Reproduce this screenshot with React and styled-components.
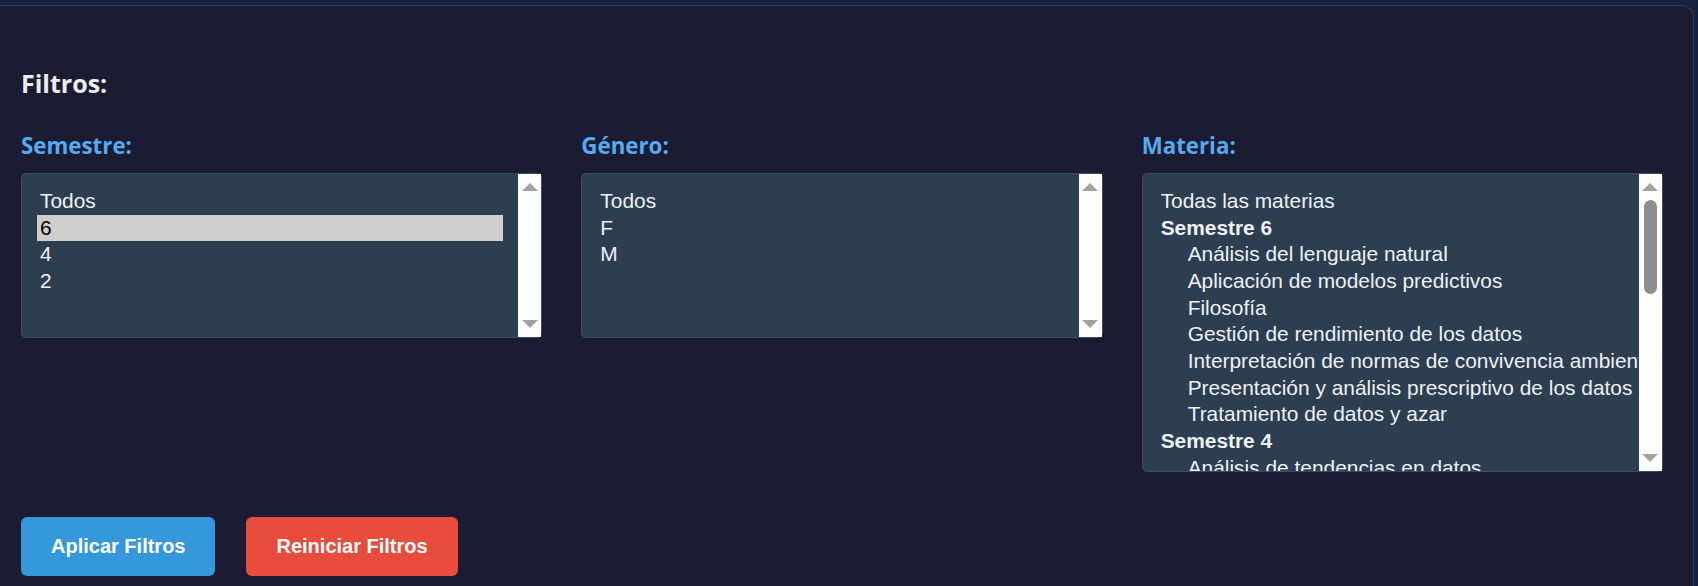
import React from "react";
import styled, { createGlobalStyle } from "styled-components";

const ROW = 26.67;

const GlobalStyle = createGlobalStyle`
  html, body {
    margin: 0;
    padding: 0;
    background: #16213e;
    overflow: hidden;
  }
`;

const Page = styled.div`
  padding: 5px 4px 0 0;
  height: 581px;
`;

const Card = styled.section`
  margin-left: -10px;
  height: 100%;
  box-sizing: border-box;
  background: #1b1c31;
  border: 1px solid #2b3d5c;
  border-bottom: none;
  border-radius: 12px 12px 0 0;
  padding: 30px 30px 0;
  font-family: "Open Sans", "Noto Sans", sans-serif;
`;

const Title = styled.h2`
  margin: 30px 0 0;
  font-size: 25px;
  line-height: 34px;
  font-weight: 700;
  color: #ececf0;
`;

const FilterGrid = styled.div`
  display: grid;
  grid-template-columns: repeat(3, minmax(0, 1fr));
  column-gap: 39px;
  align-items: start;
  margin-top: 31px;
`;

const Field = styled.div`
  display: flex;
  flex-direction: column;
  min-width: 0;
`;

const Label = styled.label`
  font-size: 22.3px;
  line-height: 30px;
  font-weight: 700;
  color: #55aaf2;
  margin-bottom: 12px;
`;

const Listbox = styled.div`
  display: flex;
  height: ${(p) => p.$rows * ROW + 30}px;
  background: #2c3e50;
  border: 1px solid #3a4d62;
  border-radius: 5px;
  font-family: "Liberation Sans", Arial, sans-serif;
  font-size: 20.9px;
  color: #eef1f4;
`;

const Options = styled.div`
  flex: 1;
  min-width: 0;
  overflow: hidden;
  padding: 14px 15px 0 15px;
`;

const Option = styled.div`
  height: ${ROW}px;
  line-height: ${ROW}px;
  padding-left: ${(p) => (p.$indent ? 30 : 3)}px;
  padding-right: 3px;
  white-space: nowrap;
  font-weight: ${(p) => (p.$group ? 700 : 400)};
  background: ${(p) => (p.$selected ? "#cecece" : "transparent")};
  color: ${(p) => (p.$selected ? "#000" : "inherit")};
`;

const Scrollbar = styled.div`
  width: 23px;
  flex: none;
  background: #fff;
  display: flex;
  flex-direction: column;
  align-items: center;
`;

const ArrowBox = styled.div`
  height: 26px;
  width: 100%;
  display: flex;
  align-items: center;
  justify-content: center;
`;

const Arrow = styled.span`
  width: 0;
  height: 0;
  border-left: 8px solid transparent;
  border-right: 8px solid transparent;
  ${(p) =>
    p.$down
      ? "border-top: 8px solid #a3a3a3;"
      : "border-bottom: 8px solid #a3a3a3;"}
`;

const Track = styled.div`
  flex: 1;
  width: 100%;
  display: flex;
  justify-content: center;
  padding-left: 1px;
  box-sizing: border-box;
`;

const Thumb = styled.div`
  width: 13px;
  border-radius: 7px;
  background: #8e8e8e;
`;

const Actions = styled.div`
  display: flex;
  gap: 31px;
  margin-top: 45px;
`;

const Button = styled.button`
  border: none;
  border-radius: 6px;
  padding: 18px 30px;
  font-family: "Liberation Sans", Arial, sans-serif;
  font-size: 20px;
  line-height: 23px;
  font-weight: 700;
  color: #fff;
  cursor: pointer;
  background: ${(p) => (p.$danger ? "#e74c3c" : "#3498db")};
`;

const semestres = [
  { label: "Todos" },
  { label: "6", selected: true },
  { label: "4" },
  { label: "2" },
];

const generos = [{ label: "Todos" }, { label: "F" }, { label: "M" }];

const materias = [
  { label: "Todas las materias" },
  { label: "Semestre 6", group: true },
  { label: "Análisis del lenguaje natural", indent: true },
  { label: "Aplicación de modelos predictivos", indent: true },
  { label: "Filosofía", indent: true },
  { label: "Gestión de rendimiento de los datos", indent: true },
  { label: "Interpretación de normas de convivencia ambiental", indent: true },
  { label: "Presentación y análisis prescriptivo de los datos", indent: true },
  { label: "Tratamiento de datos y azar", indent: true },
  { label: "Semestre 4", group: true },
  { label: "Análisis de tendencias en datos", indent: true },
  { label: "Cálculo integral", indent: true },
  { label: "Ciencia, tecnología, sociedad y valores", indent: true },
  { label: "Conciencia histórica II", indent: true },
  { label: "Estadística", indent: true },
  { label: "Inglés IV", indent: true },
  { label: "Programación de algoritmos", indent: true },
  { label: "Temas de ciencias sociales", indent: true },
  { label: "Semestre 2", group: true },
  { label: "Álgebra", indent: true },
  { label: "Ciencias naturales II", indent: true },
  { label: "Comunicación oral y escrita", indent: true },
  { label: "Cultura digital II", indent: true },
  { label: "Humanidades II", indent: true },
  { label: "Inglés II", indent: true },
  { label: "Pensamiento matemático II", indent: true },
];

function SelectList({ items, rows }) {
  const track = rows * ROW + 30 - 52;
  const overflow = items.length > rows;
  const thumb = overflow ? (track * rows) / items.length : 0;
  return (
    <Listbox $rows={rows}>
      <Options>
        {items.map((it) => (
          <Option
            key={it.label}
            $group={it.group}
            $indent={it.indent}
            $selected={it.selected}
          >
            {it.label}
          </Option>
        ))}
      </Options>
      <Scrollbar>
        <ArrowBox>
          <Arrow />
        </ArrowBox>
        <Track>{overflow && <Thumb style={{ height: thumb }} />}</Track>
        <ArrowBox>
          <Arrow $down />
        </ArrowBox>
      </Scrollbar>
    </Listbox>
  );
}

export default function App() {
  return (
    <Page>
      <GlobalStyle />
      <Card>
        <Title>Filtros:</Title>
        <FilterGrid>
          <Field>
            <Label>Semestre:</Label>
            <SelectList items={semestres} rows={5} />
          </Field>
          <Field>
            <Label>Género:</Label>
            <SelectList items={generos} rows={5} />
          </Field>
          <Field>
            <Label>Materia:</Label>
            <SelectList items={materias} rows={10} />
          </Field>
        </FilterGrid>
        <Actions>
          <Button>Aplicar Filtros</Button>
          <Button $danger>Reiniciar Filtros</Button>
        </Actions>
      </Card>
    </Page>
  );
}
